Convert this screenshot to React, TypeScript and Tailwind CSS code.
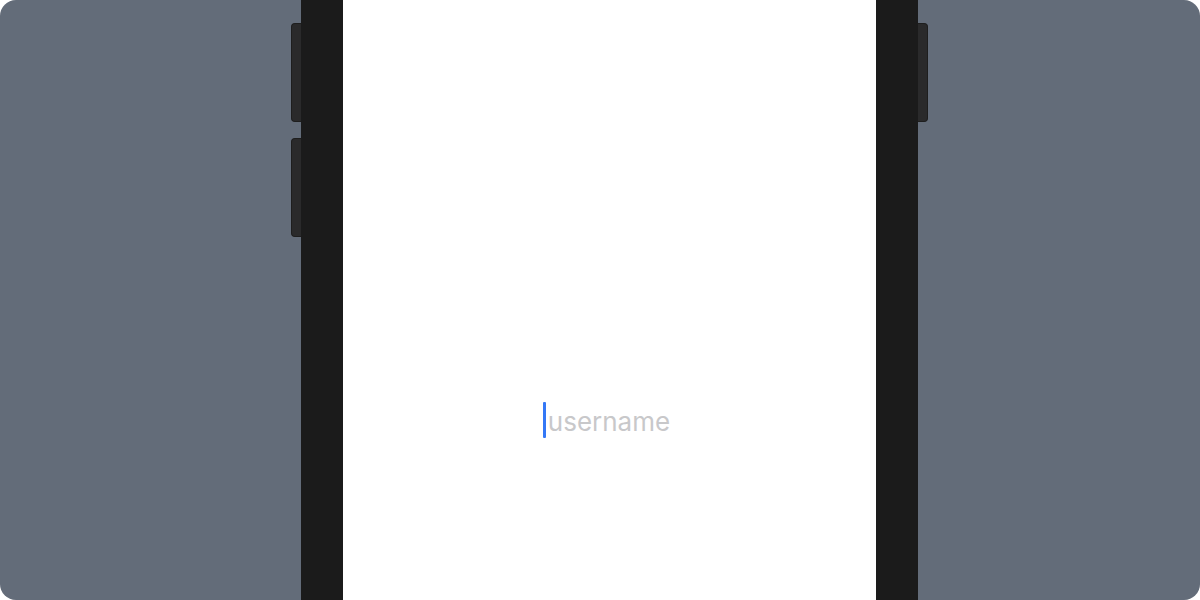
const App = () => {
    return (
        <div className="w-[1200px] h-[600px] bg-white">
            <div className="relative flex h-full overflow-hidden rounded-[16px] bg-[#636c79] pl-[301px]">
                <div className="relative h-full w-[617px] bg-[#1b1b1b] px-[42px]">
                    {/* side buttons */}
                    <div className="absolute left-[-10px] top-[23px] h-[99px] w-[10px] rounded-l-[4px] border border-r-0 border-[#1e1e1e] bg-[#2a2a2b]" />
                    <div className="absolute left-[-10px] top-[138px] h-[99px] w-[10px] rounded-l-[4px] border border-r-0 border-[#1e1e1e] bg-[#2a2a2b]" />
                    <div className="absolute right-[-10px] top-[23px] h-[99px] w-[10px] rounded-r-[4px] border border-l-0 border-[#1e1e1e] bg-[#2a2a2b]" />
                    <div className="flex h-full flex-col items-center bg-white pt-[402px]">
                        <div className="flex items-start pr-[6px]">
                            <span className="h-[36px] w-[3px] rounded-[1px] bg-[#3478f6]" />
                            <span className="pl-[2px] pt-[2px] font-['Inter',sans-serif] text-[26px] leading-[36px] text-[#c8c8ca]">
                                username
                            </span>
                        </div>
                    </div>
                </div>
            </div>
        </div>
    );
};

export default App;
